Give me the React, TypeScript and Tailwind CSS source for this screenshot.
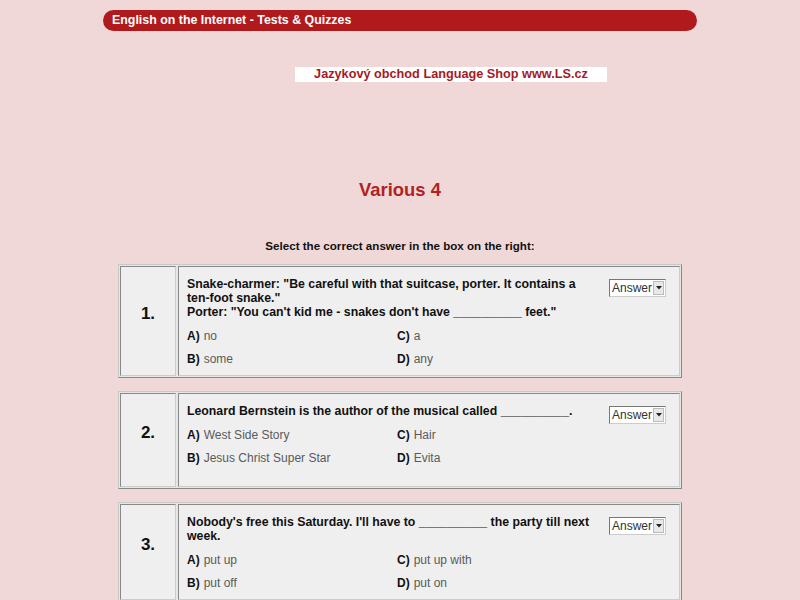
import React from "react";

type Q = { n: string; q: React.ReactNode; opts: [string, string, string, string] };

const questions: Q[] = [
  {
    n: "1.",
    q: (
      <>
        Snake-charmer: "Be careful with that suitcase, porter. It contains a <span className="whitespace-nowrap">ten-foot</span> snake."
        <br />
        Porter: "You can't kid me - snakes don't have __________ feet."
      </>
    ),
    opts: ["no", "a", "some", "any"],
  },
  {
    n: "2.",
    q: <>Leonard Bernstein is the author of the musical called __________.</>,
    opts: ["West Side Story", "Hair", "Jesus Christ Super Star", "Evita"],
  },
  {
    n: "3.",
    q: <>Nobody's free this Saturday. I'll have to __________ the party till next week.</>,
    opts: ["put up", "put up with", "put off", "put on"],
  },
];

function Opt({ l, v }: { l: string; v: string }) {
  return (
    <div className="h-[23px] flex items-center text-[12px]">
      <span className="font-bold text-[#111]">{l})</span>
      <span className="ml-[4px] text-[#5a5a5a]">{v}</span>
    </div>
  );
}

function Select() {
  return (
    <div className="shrink-0 self-start mt-[2px] -mb-[6px] w-[57px] h-[18px] flex items-center bg-white border border-t-[#777] border-l-[#777] border-b-[#ccc] border-r-[#ccc] text-[12px] text-[#333]">
      <span className="pl-[2px] flex-1 leading-none">Answer</span>
      <span className="w-[11px] h-[14px] mr-[1px] bg-[#e8e8e8] border border-[#bbb] flex items-center justify-center">
        <svg width="6" height="4" viewBox="0 0 6 4">
          <path d="M0 0 L6 0 L3 3.5 Z" fill="#222" />
        </svg>
      </span>
    </div>
  );
}

export default function App() {
  return (
    <div
      className="min-h-screen bg-[#f0d8d8] pt-[10px] pb-[20px]"
      style={{ fontFamily: '"Liberation Sans", Arial, sans-serif' }}
    >
      <div className="mx-auto w-[594px] h-[21px] rounded-full bg-[#b11a1c] flex items-center pl-[9px]">
        <span className="text-white font-bold text-[12.4px]">English on the Internet - Tests &amp; Quizzes</span>
      </div>

      <div className="mt-[36px] flex justify-center pl-[102px]">
        <div className="w-[312px] h-[15px] bg-white flex items-center justify-center">
          <span className="text-[#a51a26] font-bold text-[12.7px] leading-none">Jazykový obchod Language Shop www.LS.cz</span>
        </div>
      </div>

      <div className="mt-[97px] text-center text-[18.4px] leading-[21px] font-bold text-[#b22222]">Various 4</div>

      <div className="mt-[39px] text-center text-[11.6px] leading-[13px] font-bold text-[#111]">
        Select the correct answer in the box on the right:
      </div>

      <div className="mt-[12px] mx-auto w-[564px] flex flex-col gap-[13px]">
        {questions.map((q) => (
          <div
            key={q.n}
            className="min-h-[98px] flex gap-[2px] p-[1px] bg-[#e6e6e6] border border-t-[#c8c8c8] border-l-[#c8c8c8] border-b-[#888] border-r-[#888]"
          >
            <div className="w-[56px] shrink-0 bg-[#efefef] border border-t-[#888] border-l-[#888] border-b-[#ccc] border-r-[#ccc] flex items-center justify-center pb-[14px]">
              <span className="font-bold text-[17px] text-[#111]">{q.n}</span>
            </div>
            <div className="flex-1 bg-[#efefef] border border-t-[#888] border-l-[#888] border-b-[#ccc] border-r-[#ccc] pl-[8px] pr-[13px] pt-[10px] pb-[5px]">
              <div className="flex gap-[8px]">
                <div className="flex-1 text-[12.3px] leading-[14px] font-bold text-[#111]">{q.q}</div>
                <Select />
              </div>
              <div className="mt-[5px] grid grid-cols-[210px_1fr]">
                <Opt l="A" v={q.opts[0]} />
                <Opt l="C" v={q.opts[1]} />
                <Opt l="B" v={q.opts[2]} />
                <Opt l="D" v={q.opts[3]} />
              </div>
            </div>
          </div>
        ))}
      </div>
    </div>
  );
}
